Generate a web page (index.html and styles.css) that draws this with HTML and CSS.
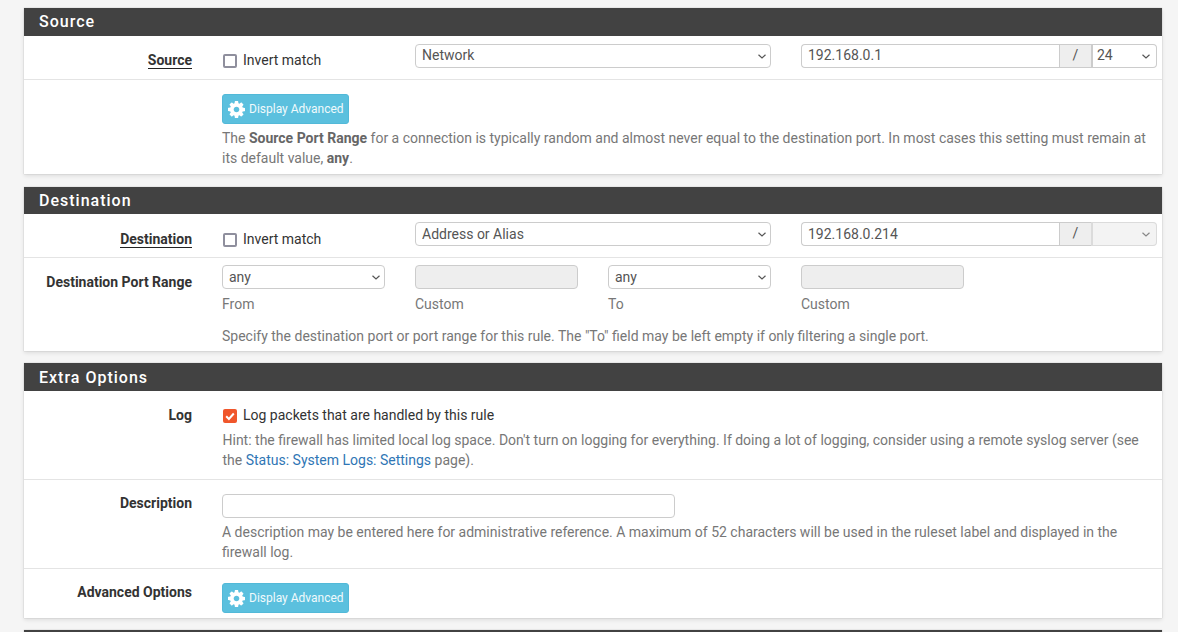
FILE: index.html
```html
<!DOCTYPE html>
<html lang="en">
<head>
    <meta charset="UTF-8">
    <title>Firewall rule</title>
    <link rel="stylesheet" href="styles.css">
</head>
<body>
    <svg class="defs" width="0" height="0">
        <symbol id="gear" viewBox="0 0 1536 1536">
            <path d="M1024 768q0-106-75-181t-181-75-181 75-75 181 75 181 181 75 181-75 75-181zm512-109v222q0 12-8 23t-20 13l-185 28q-19 54-39 91 35 50 107 138 10 12 10 25t-9 23q-27 37-99 108t-94 71q-12 0-26-9l-138-108q-44 23-91 38-16 136-29 186-7 28-36 28h-222q-14 0-24.500-8.500t-11.500-21.500l-28-184q-49-16-90-37l-141 107q-10 9-25 9-14 0-25-11-126-114-165-168-7-10-7-23 0-12 8-23 15-21 51-66.500t54-70.500q-27-50-41-99l-183-27q-13-2-21-12.500t-8-23.500v-222q0-12 8-23t19-13l186-28q14-46 39-92-40-57-107-138-10-12-10-24 0-10 9-23 26-36 98.500-107.500t94.500-71.500q13 0 26 10l138 107q44-23 91-38 16-136 29-186 7-28 36-28h222q14 0 24.500 8.500t11.500 21.500l28 184q49 16 90 37l142-107q9-9 24-9 13 0 25 10 129 119 165 170 7 8 7 22 0 12-8 23-15 21-51 66.500t-54 70.500q26 50 41 98l183 28q13 2 21 12.500t8 23.500z"/>
        </symbol>
    </svg>

    <section class="panel panel-source">
        <h2 class="panel-title">Source</h2>
        <div class="row">
            <div class="label label-low"><span class="underlined">Source</span></div>
            <div class="fields">
                <label class="check-label"><span class="check"></span>Invert match</label>
                <select class="control"><option>Network</option></select>
                <div class="addr-group">
                    <input class="addr" type="text" value="192.168.0.1">
                    <span class="slash">/</span>
                    <select class="mask"><option>24</option></select>
                </div>
            </div>
        </div>
        <div class="row row-tall row-last">
            <div class="label"></div>
            <div class="content">
                <button class="btn-info"><svg class="gear"><use href="#gear"/></svg>Display Advanced</button>
                <p class="help">The <b>Source Port Range</b> for a connection is typically random and almost never equal to the destination port. In most cases this setting must remain at its default value, <b>any</b>.</p>
            </div>
        </div>
    </section>

    <section class="panel panel-dest">
        <h2 class="panel-title">Destination</h2>
        <div class="row">
            <div class="label label-low"><span class="underlined">Destination</span></div>
            <div class="fields">
                <label class="check-label"><span class="check"></span>Invert match</label>
                <select class="control"><option>Address or Alias</option></select>
                <div class="addr-group">
                    <input class="addr" type="text" value="192.168.0.214">
                    <span class="slash">/</span>
                    <select class="mask" disabled><option></option></select>
                </div>
            </div>
        </div>
        <div class="row row-ports">
            <div class="label label-high">Destination Port Range</div>
            <div class="content">
                <div class="ports">
                    <div><select class="control"><option>any</option></select><span class="sub">From</span></div>
                    <div><input class="control" type="text" disabled><span class="sub">Custom</span></div>
                    <div><select class="control"><option>any</option></select><span class="sub">To</span></div>
                    <div><input class="control" type="text" disabled><span class="sub">Custom</span></div>
                </div>
                <p class="help help-ports">Specify the destination port or port range for this rule. The "To" field may be left empty if only filtering a single port.</p>
            </div>
        </div>
    </section>

    <section class="panel">
        <h2 class="panel-title">Extra Options</h2>
        <div class="row row-tall">
            <div class="label">Log</div>
            <div class="content">
                <label class="check-label"><span class="check checked"><svg viewBox="0 0 14 14"><path d="M3.200 7.300l2.700 2.700 4.900-5.500"/></svg></span>Log packets that are handled by this rule</label>
                <p class="help help-log">Hint: the firewall has limited local log space. Don't turn on logging for everything. If doing a lot of logging, consider using a remote syslog server (see the <a href="#">Status: System Logs: Settings</a> page).</p>
            </div>
        </div>
        <div class="row row-tall row-desc">
            <div class="label label-up">Description</div>
            <div class="content">
                <input class="desc" type="text">
                <p class="help">A description may be entered here for administrative reference. A maximum of 52 characters will be used in the ruleset label and displayed in the firewall log.</p>
            </div>
        </div>
        <div class="row row-tall row-last row-btn">
            <div class="label label-up">Advanced Options</div>
            <div class="content">
                <button class="btn-info"><svg class="gear"><use href="#gear"/></svg>Display Advanced</button>
            </div>
        </div>
    </section>

    <section class="panel">
        <h2 class="panel-title"></h2>
    </section>
</body>
</html>
```

FILE: styles.css
```css
html, body {
    height: 632px;
    overflow: hidden;
}

body {
    box-sizing: border-box;
    margin: 0;
    padding: 8px 16px 0 24px;
    background-color: #f5f5f5;
    color: #333;
    font-family: Roboto, "Liberation Sans", sans-serif;
    font-size: 14px;
    line-height: 20px;
}

.defs {
    position: absolute;
}

.panel {
    background-color: #fff;
    margin-bottom: 12px;
    box-shadow: 0 0 1px rgba(0, 0, 0, 0.25), 0 2px 4px rgba(0, 0, 0, 0.1);
}

.panel-source {
    margin-bottom: 13px;
}

.panel-title {
    margin: 0;
    height: 28px;
    padding-left: 15px;
    background-color: #424242;
    color: #fff;
    font-size: 16px;
    font-weight: 500;
    line-height: 30px;
    letter-spacing: 1px;
}

.panel-source .panel-title {
    line-height: 27px;
}

.panel-dest .panel-title {
    height: 27px;
    line-height: 28px;
}

.row {
    display: grid;
    grid-template-columns: 168px 935px;
    column-gap: 30px;
    padding: 8px 0 9px;
    border-bottom: 1px solid #e4e4e4;
}

.row-tall {
    padding: 14px 0 9px;
}

.row-desc {
    padding-bottom: 6px;
}

.row-last {
    border-bottom: 0;
    padding-bottom: 6px;
}

.row-btn {
    padding-bottom: 5px;
}

.row-ports {
    padding: 7px 0 5px;
    border-bottom: 0;
}

.panel-dest .row:first-of-type {
    padding-bottom: 8px;
}

.label {
    text-align: right;
    font-weight: 700;
    color: #333;
}

.label-high {
    padding-top: 7px;
}

.label-up {
    margin-top: -1px;
}

.label-low,
.fields .check-label {
    padding-top: 6px;
}

.panel-dest .label-low,
.panel-dest .fields .check-label {
    padding-top: 7px;
}

.underlined {
    border-bottom: 1px solid #222;
}

.fields {
    display: grid;
    grid-template-columns: repeat(5, 163px);
    column-gap: 30px;
    align-items: start;
}

.check-label {
    display: flex;
    align-items: center;
    height: 20px;
    color: #333;
}

.check {
    box-sizing: border-box;
    width: 14px;
    height: 14px;
    margin: 1px 6px 0 1px;
    border: 2px solid #8f8f9d;
    border-radius: 2px;
    background-color: #fff;
}

.check.checked {
    border: 0;
    background-color: #f0562b;
}

.check svg {
    display: block;
    fill: none;
    stroke: #fff;
    stroke-width: 2;
}

.control,
.addr,
.mask,
.desc {
    box-sizing: border-box;
    height: 24px;
    border: 1px solid #ccc;
    background-color: #fff;
    color: #555;
    font-family: inherit;
    font-size: 14px;
    outline: 0;
}

.control,
.desc {
    display: block;
    border-radius: 4px;
    padding: 0 6px 2px;
}

select.control,
.mask {
    appearance: none;
    background-image: url("data:image/svg+xml,%3Csvg xmlns='http://www.w3.org/2000/svg' width='8' height='5'%3E%3Cpath d='M.5.8L4 4 7.500.8' fill='none' stroke='%23555' stroke-width='1.200'/%3E%3C/svg%3E");
    background-repeat: no-repeat;
    background-position: right 4px center;
}

input.control {
    background-color: #eee;
}

.fields > .control {
    grid-column: 2 / span 2;
    width: 356px;
}

.addr-group {
    grid-column: 4 / span 2;
    display: flex;
    width: 356px;
}

.addr {
    width: 258px;
    padding: 0 6px 2px;
    border-radius: 4px 0 0 4px;
    border-right: 0;
}

.panel-dest .addr,
.panel-dest select.control {
    padding-bottom: 0;
}

.slash {
    box-sizing: border-box;
    width: 32px;
    height: 24px;
    border: 1px solid #ccc;
    border-right: 0;
    background-color: #eee;
    color: #555;
    text-align: center;
    line-height: 21px;
}

.mask {
    width: 66px;
    border-left: 2px solid #ccc;
    border-radius: 0 4px 4px 0;
    padding: 0 4px 2px;
    background-position: right 6px center;
}

.mask:disabled {
    background-color: #eee;
}

.btn-info {
    display: flex;
    align-items: center;
    box-sizing: border-box;
    width: 127px;
    height: 30px;
    padding: 0 0 0 5px;
    border: 1px solid #52b9d8;
    border-radius: 3px;
    background-color: #5bc0de;
    color: #f0fafc;
    font-family: inherit;
    font-size: 12px;
}

.gear {
    width: 17px;
    height: 17px;
    margin-right: 4px;
    fill: #fff;
}

.help {
    margin: 4px 0 0;
    color: #777;
}

.help b {
    color: #666;
}

.help a {
    color: #2f76b5;
    text-decoration: none;
}

.help-log {
    margin-top: 5px;
    padding-left: 0.5px;
}

.help-ports {
    margin-top: 12px;
}

.ports {
    display: grid;
    grid-template-columns: repeat(4, 163px);
    column-gap: 30px;
}

.ports .control {
    width: 163px;
}

.sub {
    display: block;
    margin-top: 5px;
    color: #777;
}

.desc {
    width: 453px;
}
```
